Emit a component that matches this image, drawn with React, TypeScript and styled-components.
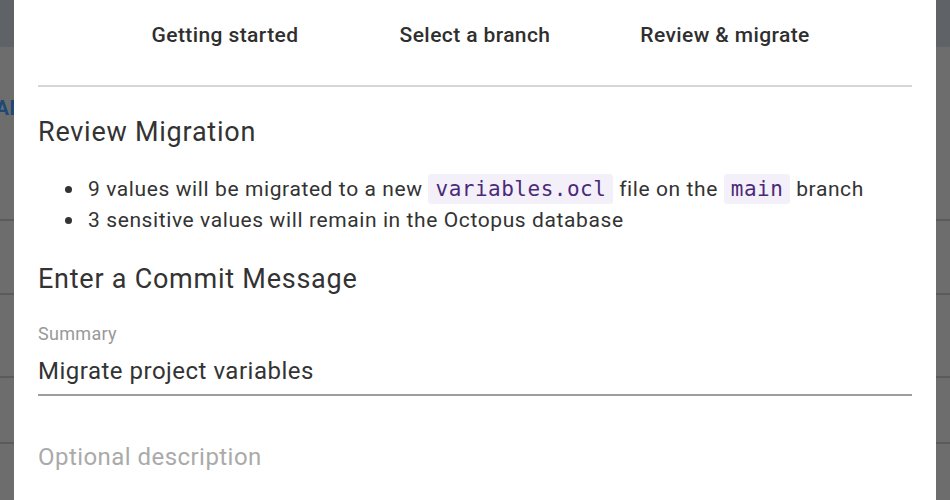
import React from "react";
import styled, { createGlobalStyle } from "styled-components";

const Global = createGlobalStyle`
  html, body { margin: 0; padding: 0; height: 100%; overflow: hidden; }
  body { font-family: Roboto, "Noto Sans", Arial, sans-serif; background: #6d6d6d; }
`;

const Page = styled.div`
  display: flex;
  width: 950px;
  height: 500px;
  overflow: hidden;
`;

const Backdrop = styled.div<{ $w: number }>`
  width: ${(p) => p.$w}px;
  flex: none;
  display: flex;
  flex-direction: column;
  background: #6d6d6d;
  overflow: hidden;
`;

const TopBar = styled.div`
  height: 47px;
  background: #5f6367;
  flex: none;
`;

const BgRow = styled.div<{ $h: number }>`
  height: ${(p) => p.$h}px;
  flex: none;
  border-bottom: 2px solid #5b5b5b;
  box-sizing: border-box;
  display: flex;
  align-items: center;
  justify-content: flex-end;
  white-space: nowrap;
`;

const BgLink = styled.span`
  font-weight: 700;
  font-size: 20px;
  color: #1d4877;
  letter-spacing: 0.5px;
  margin-right: -10px;
  margin-top: -50px;
`;

const Modal = styled.div`
  flex: 1;
  background: #fff;
  padding: 0 24px;
  display: flex;
  flex-direction: column;
`;

const Tabs = styled.div`
  display: grid;
  grid-template-columns: repeat(3, 250px);
  justify-content: center;
  height: 87px;
  border-bottom: 2px solid #d6d6d6;
  box-sizing: border-box;
`;

const Tab = styled.div`
  font-weight: 500;
  font-size: 21px;
  color: #2f2f2f;
  text-align: center;
  padding-top: 21px;
  line-height: 28px;
  letter-spacing: 0.4px;
  white-space: nowrap;
`;

const Heading = styled.h2<{ $top: number }>`
  margin: ${(p) => p.$top}px 0 0;
  font-weight: 400;
  font-size: 27px;
  line-height: 32px;
  letter-spacing: 0.75px;
  color: #333;
`;

const List = styled.ul`
  margin: 26px 0 0;
  padding-left: 50px;
  list-style: none;
  font-size: 21px;
  line-height: 31px;
  letter-spacing: 0.6px;
  color: #333;
  white-space: nowrap;
`;

const Item = styled.li`
  display: flex;
  align-items: center;
  gap: 0;
  &::before {
    content: "";
    width: 7px;
    height: 7px;
    border-radius: 50%;
    background: #333;
    flex: none;
    margin-left: -23px;
    margin-right: 16px;
  }
`;

const ItemText = styled.span``;

const Code = styled.code`
  font-family: "DejaVu Sans Mono", "Liberation Mono", monospace;
  font-size: 21px;
  letter-spacing: 0.5px;
  background: #f4f0fa;
  color: #4a2a78;
  padding: 3px 7px;
  border-radius: 3px;
`;

const Label = styled.div`
  margin-top: 29px;
  font-size: 18px;
  letter-spacing: 0.3px;
  color: #999;
  line-height: 20px;
`;

const Input = styled.div`
  margin-top: 12px;
  font-size: 24px;
  letter-spacing: 0.5px;
  line-height: 30px;
  color: #333;
  padding-bottom: 8px;
  border-bottom: 2px solid #9e9e9e;
`;

const Placeholder = styled.div`
  margin-top: 46px;
  font-size: 24px;
  letter-spacing: 0.45px;
  line-height: 30px;
  color: #aaa;
`;

const bgRows = [174, 74, 83, 66, 120];

function Side({ w, link }: { w: number; link?: boolean }) {
  return (
    <Backdrop $w={w}>
      <TopBar />
      {bgRows.map((h, i) => (
        <BgRow key={i} $h={h}>
          {link && i === 0 ? <BgLink>AN</BgLink> : null}
        </BgRow>
      ))}
    </Backdrop>
  );
}

export default function App() {
  return (
    <>
      <Global />
      <Page>
        <Side w={14} link />
        <Modal>
          <Tabs>
            <Tab>Getting started</Tab>
            <Tab>Select a branch</Tab>
            <Tab>Review &amp; migrate</Tab>
          </Tabs>
          <Heading $top={29}>Review Migration</Heading>
          <List>
            <Item>
              <ItemText>
                9 values will be migrated to a new <Code>variables.ocl</Code>{" "}
                file on the <Code>main</Code> branch
              </ItemText>
            </Item>
            <Item>
              <ItemText>
                3 sensitive values will remain in the Octopus database
              </ItemText>
            </Item>
          </List>
          <Heading $top={27}>Enter a Commit Message</Heading>
          <Label>Summary</Label>
          <Input>Migrate project variables</Input>
          <Placeholder>Optional description</Placeholder>
        </Modal>
        <Side w={14} />
      </Page>
    </>
  );
}
